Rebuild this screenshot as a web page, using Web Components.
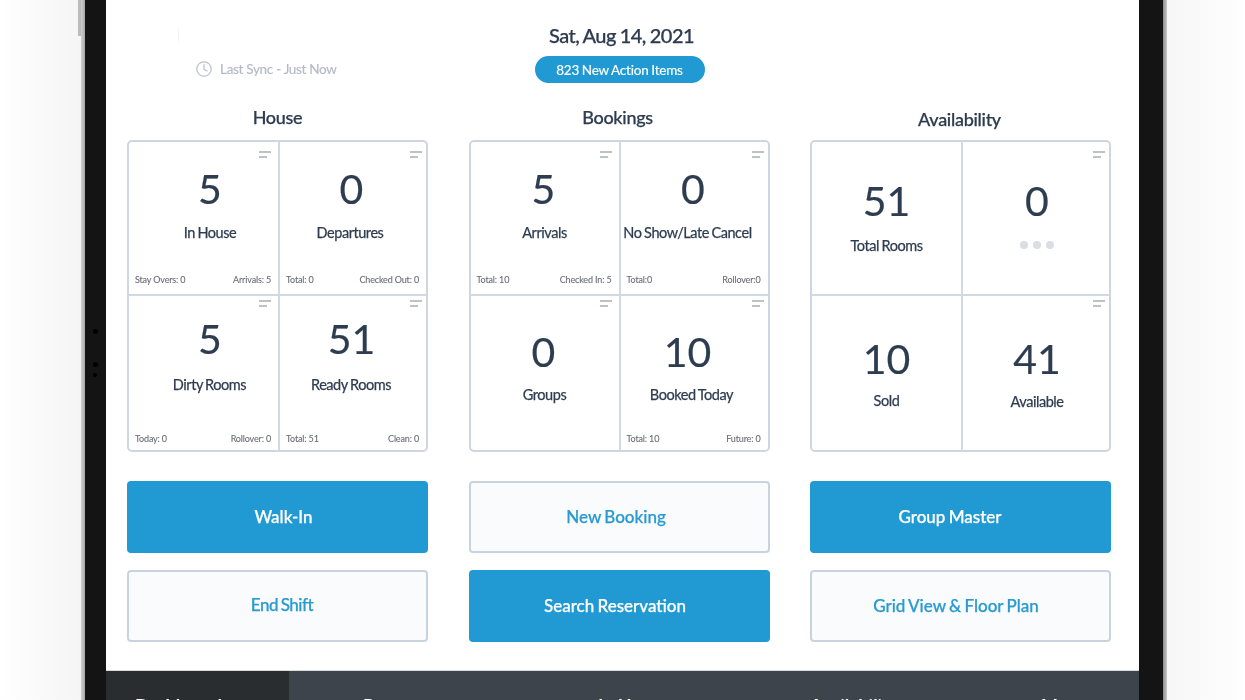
<!DOCTYPE html>
<html>
<head>
<meta charset="utf-8">
<title>Dashboard</title>
<style>
  html, body { margin: 0; height: 100%; overflow: hidden; background: #fff; }
  body { font-family: "Lato", "Open Sans", sans-serif; color: #2e3c50; }
</style>
</head>
<body>
<tablet-frame>
  <dash-header date="Sat, Aug 14, 2021" sync="Last Sync - Just Now" action="823 New Action Items"></dash-header>
  <div style="display:grid;grid-template-columns:repeat(3,301px);column-gap:40.5px;padding:0 0 0 21px">
    <stat-group title="House" split="151">
      <stat-cell value="5" label="In House" foot-l="Stay Overs: 0" foot-r="Arrivals: 5" menu top="27" gap="15" lx="6.5" nx="6.5"></stat-cell>
      <stat-cell value="0" label="Departures" foot-l="Total: 0" foot-r="Checked Out: 0" menu top="27" gap="15" lx="-3" nx="-1.5"></stat-cell>
      <stat-cell value="5" label="Dirty Rooms" foot-l="Today: 0" foot-r="Rollover: 0" menu top="23" gap="17" lx="6" nx="6.5"></stat-cell>
      <stat-cell value="51" label="Ready Rooms" foot-l="Total: 51" foot-r="Clean: 0" menu top="23" gap="17" lx="-2" nx="-1.5"></stat-cell>
    </stat-group>
    <stat-group title="Bookings" split="150" shift="-1.5">
      <stat-cell value="5" label="Arrivals" foot-l="Total: 10" foot-r="Checked In: 5" menu top="27" gap="15" nx="-1"></stat-cell>
      <stat-cell value="0" label="No Show/Late Cancel" foot-l="Total:0" foot-r="Rollover:0" menu top="27" gap="15" lx="-6.5" nx="-1"></stat-cell>
      <stat-cell value="0" label="Groups" menu top="36" gap="14" nx="-1"></stat-cell>
      <stat-cell value="10" label="Booked Today" foot-l="Total: 10" foot-r="Future: 0" menu top="36" gap="14" lx="-2.5" nx="-6.5"></stat-cell>
    </stat-group>
    <stat-group title="Availability" split="151" shift="-1" tight>
      <stat-cell value="51" label="Total Rooms" top="39" gap="16"></stat-cell>
      <stat-cell value="0" dots menu top="39" nx="1"></stat-cell>
      <stat-cell value="10" label="Sold" top="43" gap="13"></stat-cell>
      <stat-cell value="41" label="Available" menu top="43" gap="14" lx="1" nx="1"></stat-cell>
    </stat-group>
  </div>
  <div style="display:grid;grid-template-columns:repeat(3,301px);column-gap:40.5px;row-gap:17px;padding:29px 0 0 21px">
    <action-button solid nudge="6">Walk-In</action-button>
    <action-button nudge="-3">New Booking</action-button>
    <action-button solid nudge="-10.5">Group Master</action-button>
    <action-button nudge="4.5" lift="4">End Shift</action-button>
    <action-button solid nudge="-4">Search Reservation</action-button>
    <action-button nudge="-4.5">Grid View &amp; Floor Plan</action-button>
  </div>
  <bottom-nav slot="nav"></bottom-nav>
</tablet-frame>

<script>
class TabletFrame extends HTMLElement {
    constructor() {
        super();
        this.attachShadow({ mode: 'open' });
        this.shadowRoot.innerHTML = `
            <style>
                :host { display: flex; height: 700px; width: 1245px; overflow: hidden; filter: blur(.35px); }
                .side { flex: none; }
                .out-l { width: 81px; background: linear-gradient(90deg, #fff, #f5f5f5); position: relative; }
                .out-r { flex: 1; background: linear-gradient(90deg, #f7f7f7, #fdfdfd 70px, #fff); }
                .btn { position: absolute; right: 0; top: 0; width: 3px; height: 36px; background: #bbb; }
                .edge-l { width: 4px; background: linear-gradient(90deg, #d0d0d0, #a8a8a8); }
                .edge-r { width: 4px; background: linear-gradient(90deg, #8c8c8c, #c8c8c8); }
                .bezel-l { width: 21px; background: #141414; position: relative; }
                .bezel-r { width: 24px; background: #141414; }
                .dot { position: absolute; left: 8px; width: 5px; height: 5px; border-radius: 50%; background: #000; }
                .screen { flex: none; width: 1033px; background: #fff; display: flex; flex-direction: column; }
                .body { flex: 1; }
            </style>
            <div class="side out-l"><div class="btn"></div></div>
            <div class="side edge-l"></div>
            <div class="side bezel-l">
                <div class="dot" style="top:329px"></div>
                <div class="dot" style="top:362px"></div>
                <div class="dot" style="top:373px;width:4px;height:4px"></div>
            </div>
            <div class="screen">
                <div class="body"><slot></slot></div>
                <slot name="nav"></slot>
            </div>
            <div class="side bezel-r"></div>
            <div class="side edge-r"></div>
            <div class="side out-r"></div>
        `;
    }
}
customElements.define('tablet-frame', TabletFrame);

class DashHeader extends HTMLElement {
    constructor() {
        super();
        this.attachShadow({ mode: 'open' });
    }
    connectedCallback() {
        this.shadowRoot.innerHTML = `
            <style>
                :host { display: grid; grid-template-columns: 428px 171px 1fr; height: 107px; color: #2e3c50; position: relative; }
                /* faint leftover line near the top left of the screen */
                .ghost { position: absolute; left: 72px; top: 24px; width: 1px; height: 22px;
                    background: linear-gradient(180deg, #fff, #eceef1 50%, #fff); }
                .sync { display: flex; align-items: center; gap: 8px; padding: 60px 0 0 90px; height: 18px; white-space: nowrap;
                    color: #b3bac7; font-size: 13.5px; letter-spacing: -.3px; -webkit-text-stroke: .15px #b3bac7; }
                .sync svg { flex: none; }
                .mid { display: flex; flex-direction: column; align-items: center; padding-top: 23px; }
                .date { font-size: 20px; line-height: 25px; font-weight: 500; white-space: nowrap; -webkit-text-stroke: .25px #2e3c50;
                    letter-spacing: -.5px; word-spacing: -.8px; margin-left: 4px; }
                .pill { margin-top: 8px; width: 170px; height: 27px; border-radius: 14px; background: #2199d3; color: #fff;
                    font-size: 13.5px; line-height: 28px; text-align: center; white-space: nowrap; letter-spacing: -.2px;
                    word-spacing: -.5px; -webkit-text-stroke: .15px #fff; }
            </style>
            <div class="ghost"></div>
            <div class="sync">
                <svg width="16" height="16" viewBox="0 0 16 16" fill="none" stroke="#b9c1ce" stroke-width="1.2" stroke-linecap="round">
                    <circle cx="8" cy="8" r="7.2"/><path d="M8 3.6V8.4L11 10"/>
                </svg>
                <span>${this.getAttribute('sync')}</span>
            </div>
            <div class="mid">
                <div class="date">${this.getAttribute('date')}</div>
                <div class="pill">${this.getAttribute('action')}</div>
            </div>
        `;
    }
}
customElements.define('dash-header', DashHeader);

class StatGroup extends HTMLElement {
    constructor() {
        super();
        this.attachShadow({ mode: 'open' });
    }
    connectedCallback() {
        const shift = Number(this.getAttribute('shift') || 0);
        const split = this.getAttribute('split') || 150;
        this.shadowRoot.innerHTML = `
            <style>
                :host { display: block; }
                h3 { margin: 0; height: 33px; font-size: 18px; line-height: 21px; font-weight: 500; text-align: center;
                    color: #2e3c50; -webkit-text-stroke: .25px #2e3c50; padding-top: ${this.hasAttribute('tight') ? 2 : 0}px;
                    box-sizing: border-box; margin-left: ${shift * 2}px; letter-spacing: -.3px; }
                .grid { display: grid; grid-template-columns: ${split}px 1fr; grid-template-rows: 154px 154px;
                    height: 312px; box-sizing: border-box; border: 2px solid #d0d6e1; border-radius: 5px; overflow: hidden; }
            </style>
            <h3>${this.getAttribute('title')}</h3>
            <div class="grid"><slot></slot></div>
        `;
    }
}
customElements.define('stat-group', StatGroup);

class StatCell extends HTMLElement {
    constructor() {
        super();
        this.attachShadow({ mode: 'open' });
    }
    connectedCallback() {
        const top = this.getAttribute('top') || 30;
        const gap = this.getAttribute('gap') || 14;
        const lx = Number(this.getAttribute('lx') || 0);
        const nx = Number(this.getAttribute('nx') || 0);
        const label = this.getAttribute('label');
        const footL = this.getAttribute('foot-l');
        const footR = this.getAttribute('foot-r');
        this.shadowRoot.innerHTML = `
            <style>
                :host { display: flex; flex-direction: column; position: relative; box-sizing: border-box; min-width: 0;
                    color: #2e3c50; }
                :host(:nth-of-type(odd)) { border-right: 2px solid #d3d9e3; }
                :host(:nth-of-type(-n+2)) { border-bottom: 2px solid #d3d9e3; }
                .menu { position: absolute; top: 9px; right: 4px; width: 12px; height: 7px; }
                :host(:nth-of-type(odd)) .menu { right: 7px; }
                :host(:nth-of-type(n+3)) .menu { top: 4px; }
                .num { font-size: 41px; line-height: 40px; text-align: center; margin-top: ${top}px;
                    padding-left: ${nx > 0 ? nx * 2 : 0}px; padding-right: ${nx < 0 ? -nx * 2 : 0}px; -webkit-text-stroke: .2px #2e3c50; }
                .label { font-size: 14.5px; line-height: 18px; margin-top: ${gap}px; text-align: center; white-space: nowrap;
                    margin-left: ${lx * 2}px; letter-spacing: -.45px; word-spacing: -.7px; -webkit-text-stroke: .25px #2e3c50; }
                .dots { display: flex; justify-content: center; gap: 5px; margin-top: 20px; padding-left: 2px; }
                .dots i { width: 8px; height: 8px; border-radius: 50%; background: #d9dde4; }
                .foot { margin-top: auto; display: flex; justify-content: space-between; padding: 0 7px 9px 6px;
                    font-size: 9px; line-height: 11px; color: #6a6e74; white-space: nowrap; letter-spacing: -.15px;
                    -webkit-text-stroke: .1px #6a6e74; }
                :host(:nth-of-type(n+3)) .foot { padding-bottom: 6px; }
            </style>
            ${this.hasAttribute('menu') ? `<svg class="menu" viewBox="0 0 12 7" fill="none" stroke="#7f858f" stroke-width="1.1"><path d="M0 1H12M0 6H8"/></svg>` : ''}
            <div class="num">${this.getAttribute('value')}</div>
            ${label ? `<div class="label">${label}</div>` : ''}
            ${this.hasAttribute('dots') ? `<div class="dots"><i></i><i></i><i></i></div>` : ''}
            ${footL ? `<div class="foot"><span>${footL}</span><span>${footR}</span></div>` : ''}
        `;
    }
}
customElements.define('stat-cell', StatCell);

class ActionButton extends HTMLElement {
    constructor() {
        super();
        this.attachShadow({ mode: 'open' });
    }
    connectedCallback() {
        const nudge = Number(this.getAttribute('nudge') || 0);
        const lift = this.getAttribute('lift') || 2;
        const solid = this.hasAttribute('solid');
        this.shadowRoot.innerHTML = `
            <style>
                :host { display: flex; align-items: center; justify-content: center; height: 72px; box-sizing: border-box;
                    border-radius: 4px; font-size: 17px; font-weight: 500; white-space: nowrap;
                    background: ${solid ? '#2199d3' : '#f9fbfd'};
                    color: ${solid ? '#fff' : '#2a9ad2'};
                    border: ${solid ? '0' : '2px solid #c9d3e0'};
                    padding-left: ${nudge > 0 ? nudge * 2 : 0}px; padding-right: ${nudge < 0 ? -nudge * 2 : 0}px;
                    padding-bottom: ${lift}px; word-spacing: -1px; -webkit-text-stroke: .25px currentColor; }
                :host([lift]) { letter-spacing: -.5px; }
            </style>
            <slot></slot>
        `;
    }
}
customElements.define('action-button', ActionButton);

class BottomNav extends HTMLElement {
    constructor() {
        super();
        this.attachShadow({ mode: 'open' });
        const tabs = [['Dashboard', 183, 29], ['Reports', 215, 74], ['In House', 215, 94], ['Availability', 232, 91], ['More', 188, 90]];
        this.shadowRoot.innerHTML = `
            <style>
                :host { display: flex; flex: none; height: 30px; box-sizing: border-box; border-top: 1px solid #d9dbde;
                    background: #3e444c; overflow: hidden; color: #fff; font-size: 18px; font-weight: 700; }
                .tab { flex: none; box-sizing: border-box; padding-top: 24px; line-height: 22px; white-space: nowrap; }
                .tab.on { background: #292d30; }
            </style>
            ${tabs.map(([t, w, p], i) => `<div class="tab ${i === 0 ? 'on' : ''}" style="width:${w}px;padding-left:${p}px">${t}</div>`).join('')}
        `;
    }
}
customElements.define('bottom-nav', BottomNav);
</script>
</body>
</html>
